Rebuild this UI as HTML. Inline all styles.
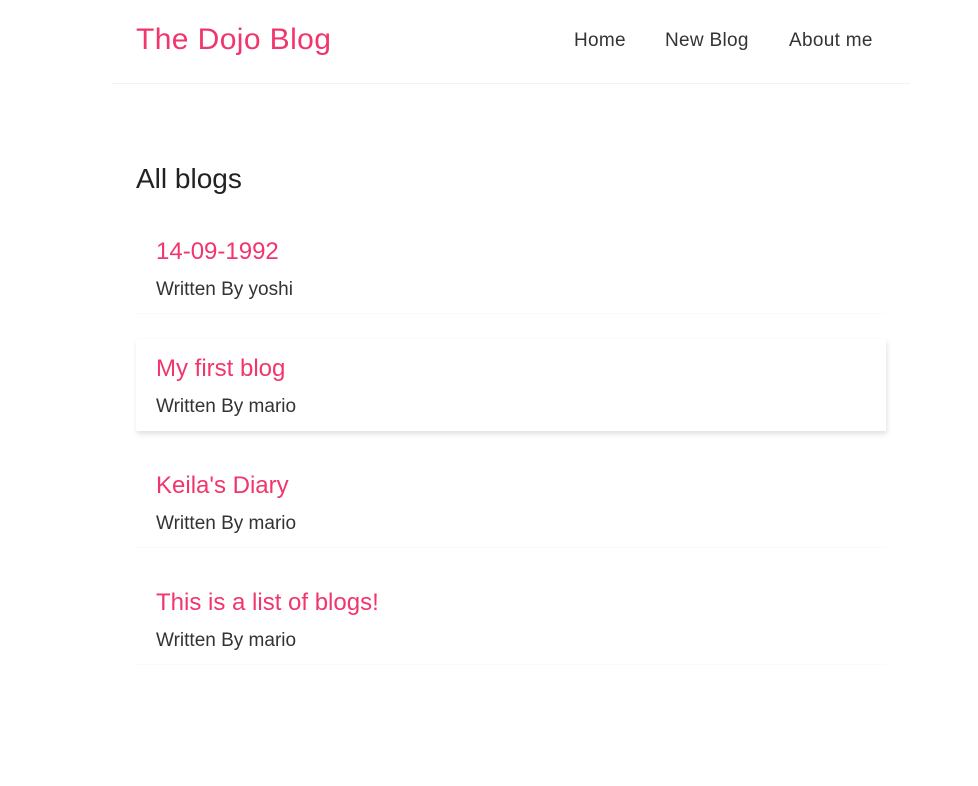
<!DOCTYPE html>
<html><head><meta charset="utf-8"><style>
*{margin:0;padding:0;box-sizing:border-box}
body{width:978px;height:786px;background:#fff;font-family:"Liberation Sans",sans-serif;color:#333;position:relative;overflow:hidden}
.nav{position:absolute;left:112px;top:0;width:798px;height:84px;border-bottom:1px solid #f2f2f2}
.logo{position:absolute;left:24px;top:23px;font-size:30px;letter-spacing:0.4px;color:#f1356d;white-space:nowrap}
.links a{position:absolute;top:30px;font-size:19px;letter-spacing:0.3px;color:#333;text-decoration:none;white-space:nowrap}
h2{position:absolute;left:136px;top:163px;font-size:28px;font-weight:normal;color:#222}
.bp{position:absolute;left:136px;width:750px;height:92px;border-bottom:1px solid #fafafa;padding:0 20px}
.bp.sh{box-shadow:1px 3px 5px rgba(0,0,0,0.12);border-bottom:none}
.bp h3{position:absolute;left:20px;top:16px;font-size:24px;font-weight:normal;color:#f1356d;white-space:nowrap}
.bp p{position:absolute;left:20px;top:57px;font-size:19px;color:#333;white-space:nowrap}
</style></head><body>
<div class="nav">
<div class="logo">The Dojo Blog</div>
<div class="links"><a style="left:462px">Home</a><a style="left:553px">New Blog</a><a style="left:677px">About me</a></div>
</div>
<h2>All blogs</h2>
<div class="bp" style="top:222px"><h3>14-09-1992</h3><p>Written By yoshi</p></div>
<div class="bp sh" style="top:339px"><h3>My first blog</h3><p>Written By mario</p></div>
<div class="bp" style="top:456px"><h3>Keila's Diary</h3><p>Written By mario</p></div>
<div class="bp" style="top:573px"><h3>This is a list of blogs!</h3><p>Written By mario</p></div>
</body></html>
